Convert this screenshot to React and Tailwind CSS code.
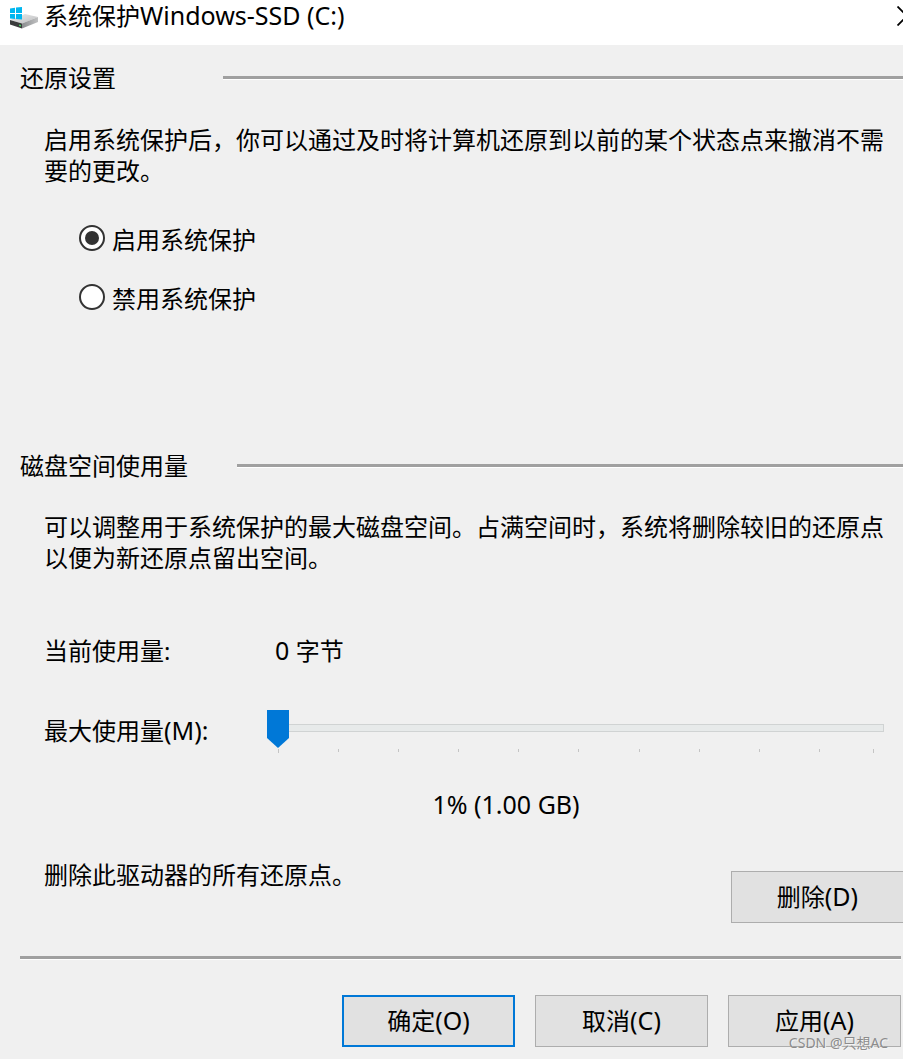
import { useState } from "react";

const buttonBase =
  "h-[52px] w-[173px] shrink-0 bg-[#e1e1e1] text-center text-2xl leading-8";

function Latin({ children }) {
  return <span className="text-[25px] leading-none">{children}</span>;
}

function DriveIcon() {
  return (
    <svg className="h-[22px] w-7 shrink-0" viewBox="0 0 28 22" aria-hidden="true">
      <defs>
        <linearGradient id="drive-top" x1="0" y1="0" x2="1" y2="1">
          <stop offset="0" stopColor="#ededed" />
          <stop offset="1" stopColor="#bcbdbf" />
        </linearGradient>
        <linearGradient id="drive-side" x1="0" y1="0" x2="1" y2="0">
          <stop offset="0" stopColor="#8b8d8f" />
          <stop offset="1" stopColor="#c0c1c2" />
        </linearGradient>
      </defs>
      <path d="M0 13 L15 7 L28 10 L12 16.5Z" fill="url(#drive-top)" />
      <path d="M12 16.5 L28 10 V15 L12 21.5Z" fill="url(#drive-side)" />
      <path d="M0 13 L12 16.5 V21.5 L0 17.5Z" fill="#3a3b3c" />
      <path d="M9 17.5 l2 .6 v1.4 l-2 -.6Z" fill="#42d05c" />
      <path d="M0 1.4 L5 .7 V6 H0Z M6 .6 L12 0 V6 H6Z M0 7 H5 V12 L0 11.4Z M6 7 H12 V12.6 L6 12Z" fill="#00b7f0" />
    </svg>
  );
}

function SectionTitle({ children, width }) {
  return (
    <div className="flex items-center pl-5">
      <h2 className={`${width} shrink-0 text-2xl leading-8`}>{children}</h2>
      <div className="h-1 flex-1 border-b border-white bg-[#a0a0a0]" />
    </div>
  );
}

function RadioOption({ id, label, checked, onSelect }) {
  return (
    <div className="flex items-start gap-[7px]">
      <input
        type="radio"
        id={id}
        name="protection"
        checked={checked}
        onChange={onSelect}
        className="mt-px grid size-[26px] shrink-0 appearance-none place-items-center rounded-full border-2 border-[#333] bg-white before:size-[14px] before:rounded-full checked:before:bg-[#333] checked:before:content-['']"
      />
      <label htmlFor={id}>{label}</label>
    </div>
  );
}

const tickSteps = [10, 10, 10, 10, 10, 10, 10, 10, 10, 9];

export default function App() {
  const [enabled, setEnabled] = useState(true);
  const [usage, setUsage] = useState(1);

  return (
    <main className="relative flex min-h-screen flex-col overflow-hidden bg-[#f0f0f0] font-['Noto_Sans','Noto_Sans_CJK_SC',sans-serif] text-2xl leading-8 text-black">
      <header className="flex h-[45px] items-start justify-between bg-white pl-[10px]">
        <div className="flex items-center gap-[6px]">
          <div className="pt-1">
            <DriveIcon />
          </div>
          <h1 className="leading-8">
            系统保护<Latin>Windows-SSD (C:)</Latin>
          </h1>
        </div>
        <button type="button" aria-label="关闭" className="-mr-[14px] pt-[6px]">
          <svg className="size-5" viewBox="0 0 20 20" fill="none" stroke="#000" strokeWidth="1.8" aria-hidden="true">
            <path d="M0.5 0.5 L19.5 19.5 M19.5 0.5 L0.5 19.5" />
          </svg>
        </button>
      </header>

      <section className="pt-[17px]">
        <SectionTitle width="w-[203px]">还原设置</SectionTitle>
        <p className="mt-[30px] pr-4 pl-11 leading-[31px]">
          启用系统保护后，你可以通过及时将计算机还原到以前的某个状态点来撤消不需要的更改。
        </p>
        <div className="mt-[38px] flex flex-col gap-[27px] pl-[79px]">
          <RadioOption id="enable" label="启用系统保护" checked={enabled} onSelect={() => setEnabled(true)} />
          <RadioOption id="disable" label="禁用系统保护" checked={!enabled} onSelect={() => setEnabled(false)} />
        </div>
      </section>

      <section className="pt-[135px]">
        <SectionTitle width="w-[217px]">磁盘空间使用量</SectionTitle>
        <p className="mt-[29px] pr-4 pl-11 leading-[31px]">
          可以调整用于系统保护的最大磁盘空间。占满空间时，系统将删除较旧的还原点以便为新还原点留出空间。
        </p>
        <div className="mt-[62px] flex pl-11">
          <span className="w-[231px]">当前使用量:</span>
          <span>
            <Latin>0 </Latin>字节
          </span>
        </div>
        <div className="mt-[43px] flex items-start pr-[19px] pl-11">
          <label htmlFor="max-usage" className="w-[223px] shrink-0 pt-[5px]">
            最大使用量<Latin>(M):</Latin>
          </label>
          <div className="flex-1">
            <input
              id="max-usage"
              type="range"
              min="1"
              max="100"
              value={usage}
              onChange={(e) => setUsage(Number(e.target.value))}
              className="block h-9 w-full appearance-none bg-transparent [&::-webkit-slider-runnable-track]:h-2 [&::-webkit-slider-runnable-track]:bg-[#e7eaea] [&::-webkit-slider-runnable-track]:shadow-[inset_0_0_0_1px_#d0d3d3] [&::-webkit-slider-thumb]:-mt-[14px] [&::-webkit-slider-thumb]:h-[38px] [&::-webkit-slider-thumb]:w-[22px] [&::-webkit-slider-thumb]:appearance-none [&::-webkit-slider-thumb]:bg-[#0078d7] [&::-webkit-slider-thumb]:[clip-path:polygon(0_0,100%_0,100%_74%,50%_100%,0_74%)]"
            />
            <div className="mt-[3px] flex items-start pr-[10px] pl-[11px]" aria-hidden="true">
              {tickSteps.map((step, i) => (
                <div key={i} style={{ flexGrow: step }} className="h-[3px] basis-0 border-l border-[#c4c4c4] first:h-1" />
              ))}
              <div className="h-1 w-px bg-[#c4c4c4]" />
            </div>
          </div>
        </div>
        <output htmlFor="max-usage" className="mt-9 block pl-[109px] text-center">
          <Latin>
            {usage}% ({usage.toFixed(2)} GB)
          </Latin>
        </output>
        <div className="mt-[38px] flex items-start justify-between pl-11">
          <p>删除此驱动器的所有还原点。</p>
          <button type="button" className={`${buttonBase} -mr-px mt-3 border border-[#adadad]`}>
            删除<Latin>(D)</Latin>
          </button>
        </div>
      </section>

      <footer className="mt-[33px] pr-[2px] pl-5">
        <div className="h-1 border-b border-white bg-[#a0a0a0]" />
        <div className="mt-[35px] flex justify-end gap-5">
          <button type="button" className={`${buttonBase} border-2 border-[#0078d7]`}>
            确定<Latin>(O)</Latin>
          </button>
          <button type="button" className={`${buttonBase} border border-[#adadad]`}>
            取消<Latin>(C)</Latin>
          </button>
          <button type="button" className={`${buttonBase} border border-[#adadad]`}>
            应用<Latin>(A)</Latin>
          </button>
        </div>
      </footer>
      <span className="pointer-events-none absolute right-[15px] bottom-[6px] text-sm leading-5 text-[#8c8c8c] text-shadow-[1px_1px_0_#f4f4f4]">
        CSDN @只想AC
      </span>
    </main>
  );
}
